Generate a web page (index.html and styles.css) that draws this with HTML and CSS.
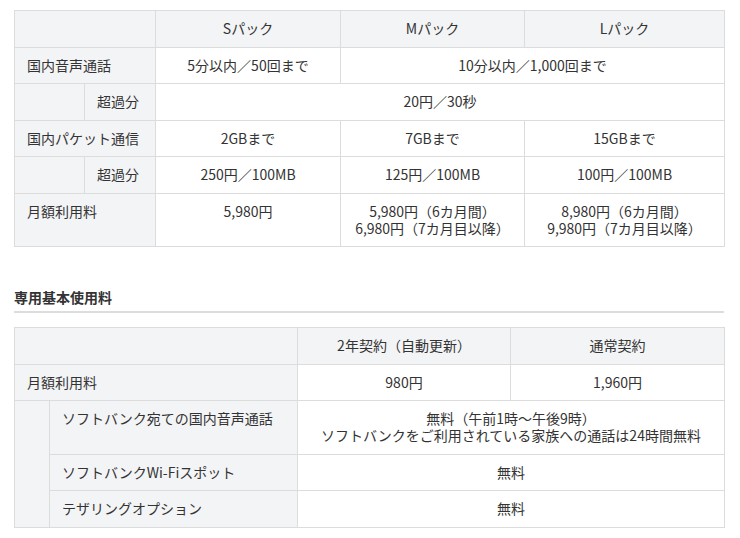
FILE: index.html
```html
<!DOCTYPE html>
<html lang="ja">
<head>
<meta charset="utf-8">
<link rel="stylesheet" href="styles.css">
</head>
<body>
<div class="page">
  <table class="plan plan-pack">
    <colgroup>
      <col class="c-sub1"><col class="c-sub2"><col class="c-s"><col class="c-m"><col class="c-l">
    </colgroup>
    <tr>
      <th class="hd" colspan="2"></th>
      <th class="hd">Sパック</th>
      <th class="hd">Mパック</th>
      <th class="hd">Lパック</th>
    </tr>
    <tr>
      <th class="lbl" colspan="2">国内音声通話</th>
      <td>5分以内／50回まで</td>
      <td colspan="2">10分以内／1,000回まで</td>
    </tr>
    <tr>
      <th class="lbl"></th>
      <th class="lbl">超過分</th>
      <td colspan="3">20円／30秒</td>
    </tr>
    <tr>
      <th class="lbl" colspan="2">国内パケット通信</th>
      <td>2GBまで</td>
      <td>7GBまで</td>
      <td>15GBまで</td>
    </tr>
    <tr>
      <th class="lbl"></th>
      <th class="lbl">超過分</th>
      <td>250円／100MB</td>
      <td>125円／100MB</td>
      <td>100円／100MB</td>
    </tr>
    <tr>
      <th class="lbl" colspan="2">月額利用料</th>
      <td>5,980円</td>
      <td>5,980円（6カ月間）<br>6,980円（7カ月目以降）</td>
      <td>8,980円（6カ月間）<br>9,980円（7カ月目以降）</td>
    </tr>
  </table>

  <h2 class="section-title">専用基本使用料</h2>

  <table class="plan plan-basic">
    <colgroup>
      <col class="b-indent"><col class="b-label"><col class="b-2y"><col class="b-norm">
    </colgroup>
    <tr>
      <th class="hd" colspan="2"></th>
      <th class="hd">2年契約（自動更新）</th>
      <th class="hd">通常契約</th>
    </tr>
    <tr>
      <th class="lbl" colspan="2">月額利用料</th>
      <td>980円</td>
      <td>1,960円</td>
    </tr>
    <tr>
      <th class="lbl" rowspan="3"></th>
      <th class="lbl">ソフトバンク宛ての国内音声通話</th>
      <td colspan="2">無料（午前1時～午後9時）<br>ソフトバンクをご利用されている家族への通話は24時間無料</td>
    </tr>
    <tr>
      <th class="lbl">ソフトバンクWi-Fiスポット</th>
      <td colspan="2">無料</td>
    </tr>
    <tr>
      <th class="lbl">テザリングオプション</th>
      <td colspan="2">無料</td>
    </tr>
  </table>
</div>
</body>
</html>
```

FILE: styles.css
```css
html, body {
  margin: 0;
  padding: 0;
  background: #ffffff;
}

body {
  font-family: "Noto Sans CJK JP", "Noto Sans", sans-serif;
  font-size: 14px;
  line-height: 17px;
  color: #333333;
}

.page {
  padding: 10px 0 0 14px;
  width: 710px;
}

.plan {
  width: 710px;
  table-layout: fixed;
  border-collapse: collapse;
}

.plan th,
.plan td {
  border: 1px solid #dcdcdc;
  padding: 9.25px 12px;
  vertical-align: top;
  font-weight: 400;
}

.plan td {
  text-align: center;
  background: #ffffff;
}

.plan .hd {
  background: #f3f4f6;
  text-align: center;
}

.plan .lbl {
  background: #f3f4f6;
  text-align: left;
}

.c-sub1 { width: 70px; }
.c-sub2 { width: 71px; }
.c-s { width: 185px; }
.c-m { width: 184px; }
.c-l { width: 200px; }

.b-indent { width: 35px; }
.b-label { width: 248px; }
.b-2y { width: 213px; }
.b-norm { width: 214px; }

.section-title {
  margin: 42px 0 14px;
  padding: 0 0 5px;
  font-size: 14px;
  line-height: 17px;
  font-weight: 700;
  color: #333333;
  border-bottom: 2px solid #dddddd;
}
```
